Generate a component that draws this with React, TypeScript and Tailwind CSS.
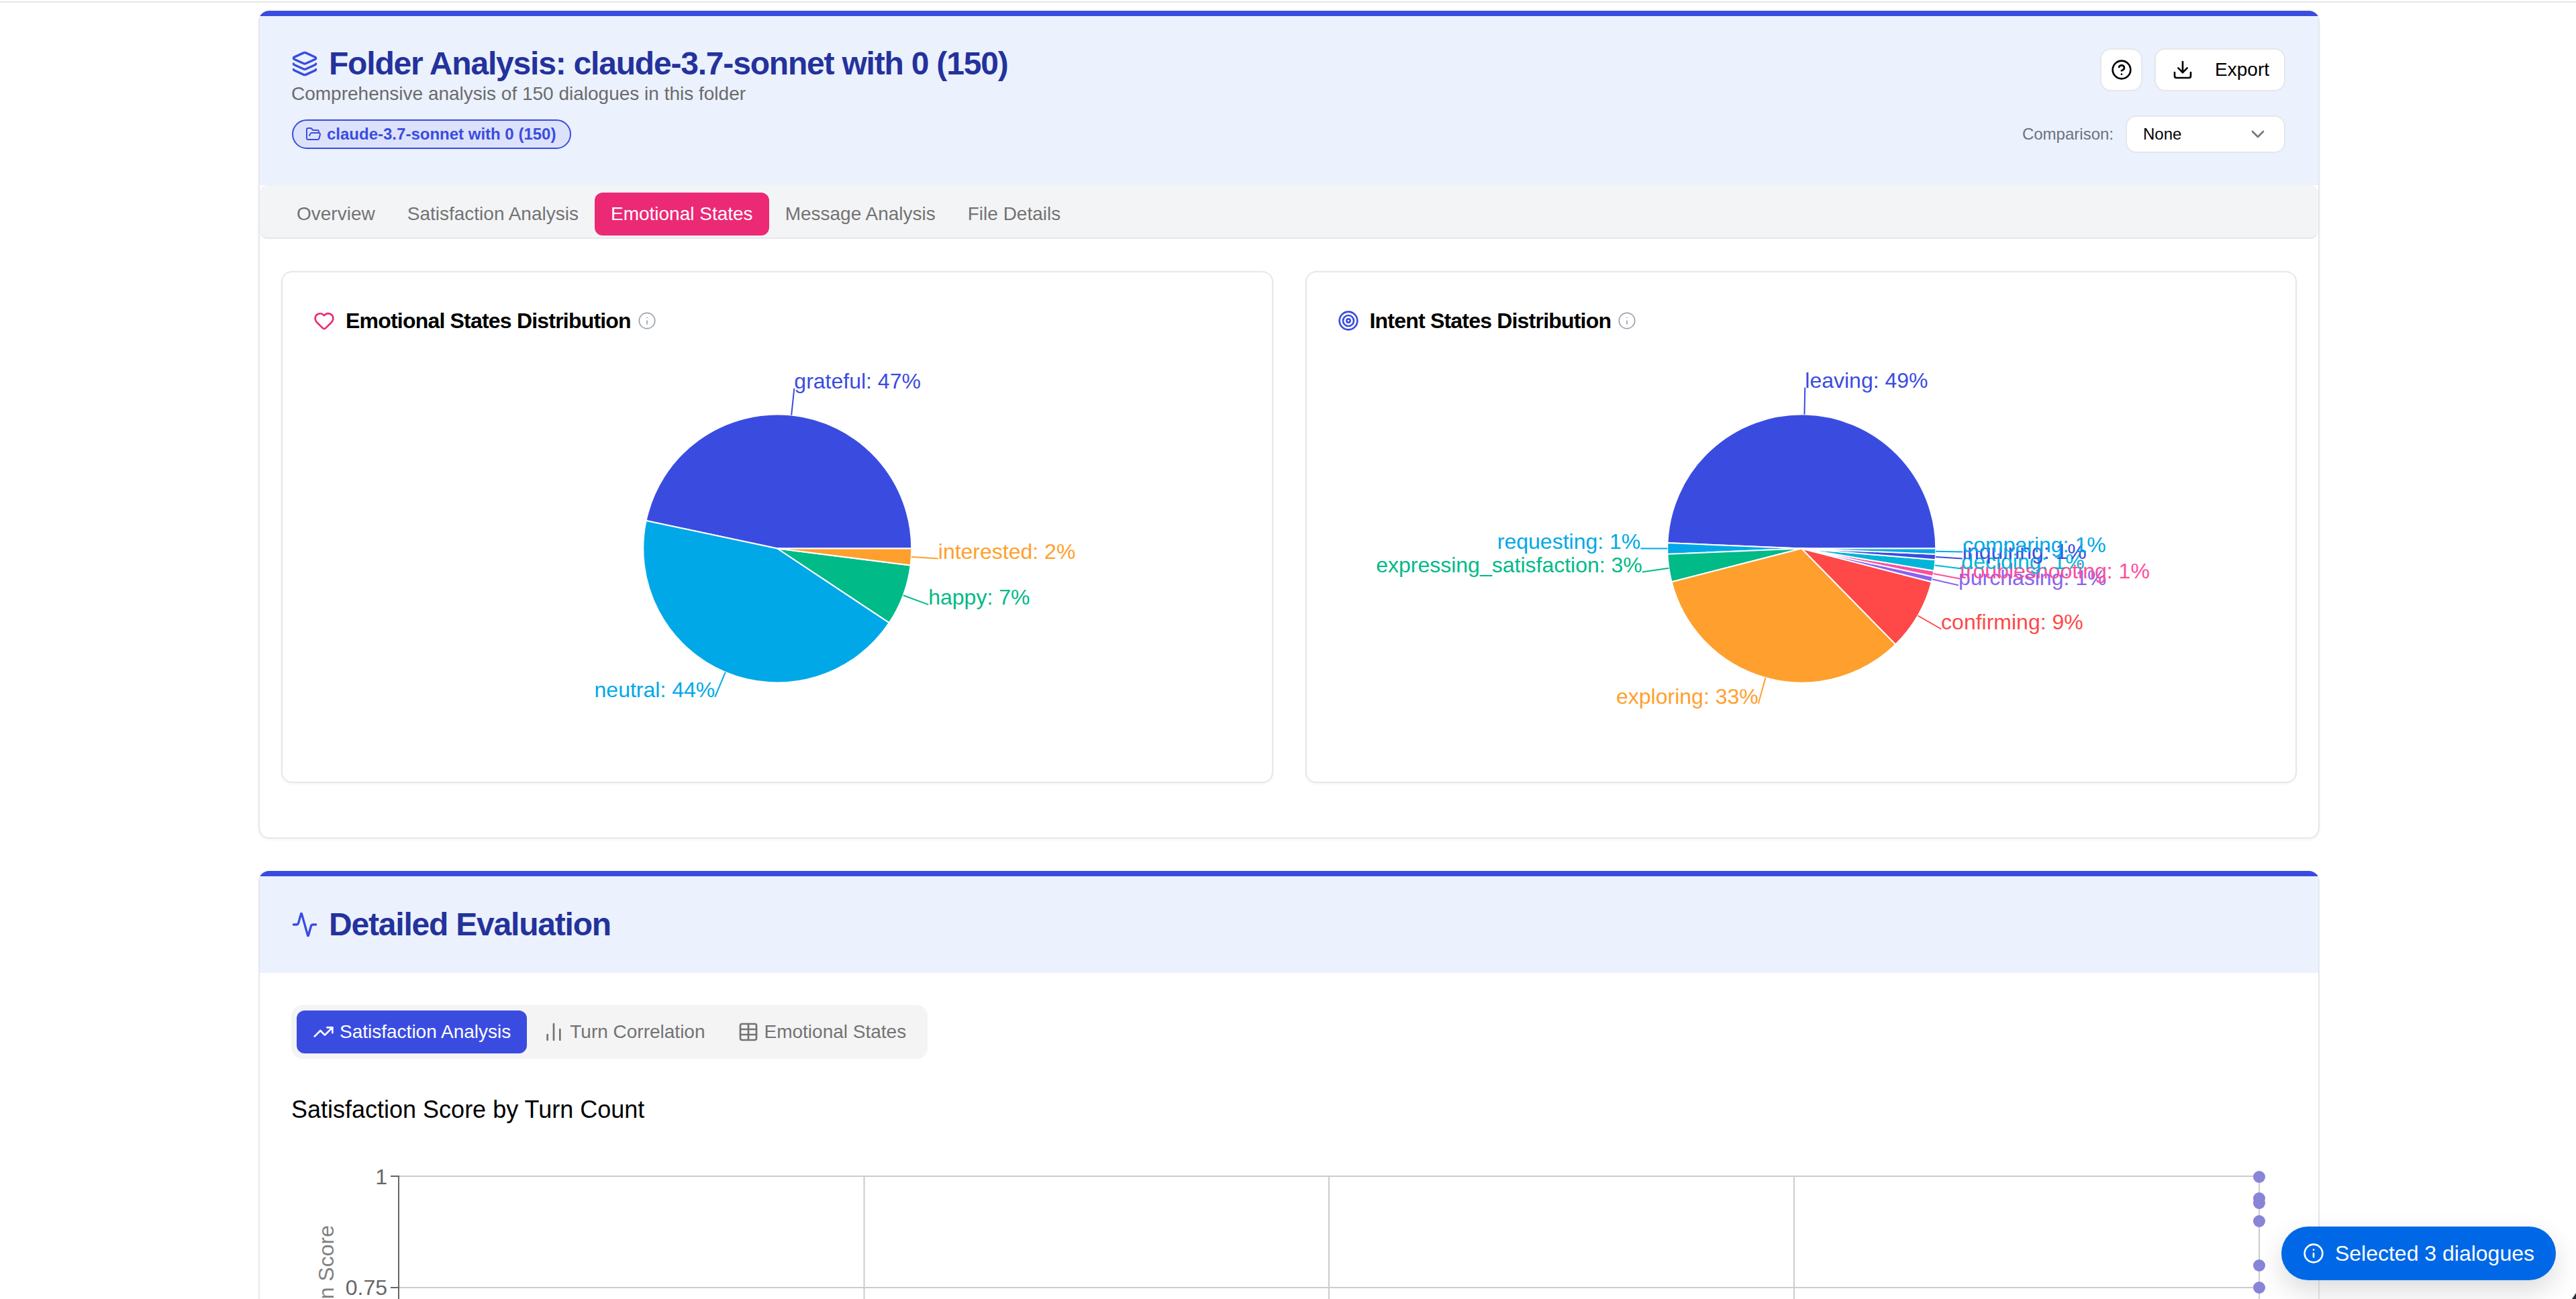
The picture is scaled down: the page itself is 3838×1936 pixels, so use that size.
import {
  Activity,
  ChartNoAxesColumn,
  ChevronDown,
  CircleHelp,
  Download,
  FolderOpen,
  Heart,
  Info,
  Layers,
  Table,
  Target,
  TrendingUp,
} from "lucide-react";

type Slice = { name: string; label: string; value: number; color: string };

const BLUE = "#3a4ce0";
const CYAN = "#00a8e8";

const emotionalStates: Slice[] = [
  { name: "grateful", label: "47%", value: 70, color: BLUE },
  { name: "neutral", label: "44%", value: 66, color: CYAN },
  { name: "happy", label: "7%", value: 11, color: "#00ba88" },
  { name: "interested", label: "2%", value: 3, color: "#ff9f2d" },
];

const intentStates: Slice[] = [
  { name: "leaving", label: "49%", value: 74, color: BLUE },
  { name: "requesting", label: "1%", value: 2, color: CYAN },
  { name: "expressing_satisfaction", label: "3%", value: 5, color: "#00ba88" },
  { name: "exploring", label: "33%", value: 50, color: "#ff9f2d" },
  { name: "confirming", label: "9%", value: 13, color: "#ff4848" },
  { name: "purchasing", label: "1%", value: 1, color: "#8a63f0" },
  { name: "troubleshooting", label: "1%", value: 1, color: "#ff4d9b" },
  { name: "deciding", label: "1%", value: 2, color: "#00b5d8" },
  { name: "inquiring", label: "1%", value: 1, color: BLUE },
  { name: "comparing", label: "1%", value: 1, color: CYAN },
];

const tabs = ["Overview", "Satisfaction Analysis", "Emotional States", "Message Analysis", "File Details"];

// turn-count scatter, all the visible points sit on the last column
const scatterY = [36, 68, 75, 102, 168, 201];

const CX = 737;
const CY = 315.5;
const R = 200;

function polar(radius: number, deg: number) {
  const rad = (deg * Math.PI) / 180;
  return { x: CX + radius * Math.cos(rad), y: CY - radius * Math.sin(rad) };
}

function PieChart({ data }: { data: Slice[] }) {
  const total = data.reduce((sum, d) => sum + d.value, 0);
  let angle = 0;
  const slices = data.map((d) => {
    const start = angle;
    angle += (d.value / total) * 360;
    return { ...d, start, end: angle, mid: (start + angle) / 2 };
  });

  return (
    <svg viewBox="0 0 1473 663" className="block w-full h-[663px]">
      {slices.map((s) => {
        const a = polar(R, s.start);
        const b = polar(R, s.end);
        const large = s.end - s.start > 180 ? 1 : 0;
        return (
          <path
            key={s.name}
            d={`M${CX} ${CY}L${a.x} ${a.y}A${R} ${R} 0 ${large} 0 ${b.x} ${b.y}Z`}
            fill={s.color}
            stroke="#fff"
            strokeWidth={2}
          />
        );
      })}
      {slices.map((s) => {
        const from = polar(R, s.mid);
        const to = polar(R + 40, s.mid);
        return (
          <g key={s.name}>
            <path d={`M${from.x} ${from.y}L${to.x} ${to.y}`} stroke={s.color} strokeWidth={2} fill="none" />
            <text x={to.x} y={to.y} fill={s.color} fontSize={32} textAnchor={to.x > CX ? "start" : "end"}>
              {s.name}: {s.label}
            </text>
          </g>
        );
      })}
    </svg>
  );
}

function ScatterChart() {
  const gridX = [900.5, 1593, 2286, 2979];
  const gridY = [35, 201, 367, 533];
  return (
    <svg viewBox="0 0 3067 600" className="block w-full h-[600px]">
      {gridY.map((y) => (
        <line key={y} x1={207} x2={2979} y1={y} y2={y} stroke="#cccccc" strokeWidth={2} />
      ))}
      {gridX.map((x) => (
        <line key={x} x1={x} x2={x} y1={35} y2={600} stroke="#cccccc" strokeWidth={2} />
      ))}
      <line x1={207} x2={207} y1={34} y2={600} stroke="#666666" strokeWidth={2} />
      <line x1={195} x2={207} y1={35} y2={35} stroke="#666666" strokeWidth={2} />
      <line x1={195} x2={207} y1={201} y2={201} stroke="#666666" strokeWidth={2} />
      <text x={190} y={47} fill="#666666" fontSize={32} textAnchor="end">
        1
      </text>
      <text x={190} y={212} fill="#666666" fontSize={32} textAnchor="end">
        0.75
      </text>
      <text x={110} y={237} transform="rotate(-90 110 237)" fill="#808080" fontSize={32} textAnchor="middle">
        Satisfaction Score
      </text>
      {scatterY.map((y) => (
        <circle key={y} cx={2979} cy={y} r={9} fill="#8884d8" />
      ))}
    </svg>
  );
}

function ChartCard({ title, icon, data }: { title: string; icon: React.ReactNode; data: Slice[] }) {
  return (
    <div className="h-[763px] rounded-[16px] border-2 border-[#e5e7eb] bg-white shadow-[0_2px_4px_rgba(0,0,0,0.04)]">
      <div className="flex h-[48px] items-center pl-[46px] mt-[48px]">
        {icon}
        <span className="ml-[16px] text-[32px] font-bold tracking-[-0.8px] text-black">{title}</span>
        <Info className="ml-[10px] text-[#9ca3af]" size={28} strokeWidth={1.5} />
      </div>
      <PieChart data={data} />
    </div>
  );
}

export default function App() {
  return (
    <div className="relative h-screen overflow-hidden bg-white font-['Liberation_Sans',Arial,sans-serif]">
      <div className="h-[4px] border-b-2 border-[#e5e7eb]" />

      <div className="ml-[385px] mt-[12px] w-[3071px] h-[1234px] rounded-[16px] border-2 border-t-[8px] border-[#e5e7eb] border-t-[#3a4ce0] shadow-[0_2px_4px_rgba(0,0,0,0.04)]">
        <div className="flex h-[252px] justify-between bg-[#ebf1fd] pl-[47px] pr-[49px] pt-[48px]">
          <div>
            <div className="flex h-[46px] items-center">
              <Layers className="text-[#3a4ce0]" size={40} strokeWidth={2} />
              <h1 className="ml-[16px] text-[48px] leading-[46px] font-bold tracking-[-1.2px] text-[#24329c]">
                Folder Analysis: claude-3.7-sonnet with 0 (150)
              </h1>
            </div>
            <p className="text-[28px] leading-[44px] text-[#6b6b6b]">
              Comprehensive analysis of 150 dialogues in this folder
            </p>
            <div className="mt-[16px] ml-[1px] inline-flex h-[44px] items-center gap-[8px] rounded-full border-2 border-[#3a4ce0] bg-[#dce2fb] pl-[18px] pr-[21px] text-[24px] font-bold text-[#3a4ce0]">
              <FolderOpen size={24} strokeWidth={2} />
              claude-3.7-sonnet with 0 (150)
            </div>
          </div>
          <div className="flex flex-col items-end">
            <div className="flex gap-[18px]">
              <button className="flex h-[64px] w-[63px] items-center justify-center rounded-[16px] border-2 border-[#e5e7eb] bg-white text-black">
                <CircleHelp size={32} strokeWidth={2} />
              </button>
              <button className="flex h-[64px] items-center gap-[32px] rounded-[16px] border-2 border-[#e5e7eb] bg-white pl-[24px] pr-[22px] text-[28px] text-black">
                <Download size={32} strokeWidth={2} />
                Export
              </button>
            </div>
            <div className="mt-[36px] flex items-center gap-[18px]">
              <span className="text-[24px] text-[#6b7280]">Comparison:</span>
              <button className="flex h-[56px] w-[238px] items-center justify-between rounded-[16px] border-2 border-[#e5e7eb] bg-white pl-[24px] pr-[23px] text-[24px] text-black">
                None
                <ChevronDown className="text-[#777777]" size={32} strokeWidth={2} />
              </button>
            </div>
          </div>
        </div>

        <div className="flex h-[80px] rounded-[12px] border-b-2 border-[#e5e7eb] bg-[#f3f4f6] pl-[31px] pt-[11px]">
          {tabs.map((tab) =>
            tab === "Emotional States" ? (
              <button key={tab} className="h-[64px] rounded-[12px] bg-[#ec2975] px-[24px] text-[28px] text-white">
                {tab}
              </button>
            ) : (
              <button key={tab} className="h-[64px] px-[24px] text-[28px] text-[#737373]">
                {tab}
              </button>
            )
          )}
        </div>

        <div className="grid grid-cols-2 gap-[48px] px-[32px] pt-[48px]">
          <ChartCard
            title="Emotional States Distribution"
            icon={<Heart className="text-[#ec2975]" size={32} strokeWidth={2} />}
            data={emotionalStates}
          />
          <ChartCard
            title="Intent States Distribution"
            icon={<Target className="text-[#3a4ce0]" size={32} strokeWidth={2} />}
            data={intentStates}
          />
        </div>
      </div>

      <div className="ml-[385px] mt-[48px] w-[3071px] rounded-[16px] border-2 border-t-[8px] border-[#e5e7eb] border-t-[#3a4ce0]">
        <div className="flex h-[144px] items-center gap-[16px] bg-[#ebf1fd] pl-[47px]">
          <Activity className="text-[#3a4ce0]" size={40} strokeWidth={2} />
          <h2 className="text-[48px] font-bold tracking-[-1.2px] text-[#24329c]">Detailed Evaluation</h2>
        </div>
        <div className="px-[47px] pt-[48px]">
          <div className="inline-flex h-[80px] items-center rounded-[16px] bg-[#f4f4f5] p-[8px] text-[28px] text-[#737373]">
            <button className="flex h-[64px] items-center gap-[8px] rounded-[12px] bg-[#3a4ce0] px-[24px] text-white">
              <TrendingUp size={32} strokeWidth={2} />
              Satisfaction Analysis
            </button>
            <button className="flex h-[64px] items-center gap-[8px] px-[24px]">
              <ChartNoAxesColumn size={32} strokeWidth={2} />
              Turn Correlation
            </button>
            <button className="flex h-[64px] items-center gap-[8px] px-[24px]">
              <Table size={32} strokeWidth={2} />
              Emotional States
            </button>
          </div>
          <h3 className="mt-[52px] text-[36px] leading-[48px] text-black">Satisfaction Score by Turn Count</h3>
        </div>
        <div className="mt-[40px]">
          <ScatterChart />
        </div>
      </div>

      <div className="absolute bottom-[28px] right-[30px] flex h-[80px] items-center gap-[16px] rounded-full bg-[#0068e6] px-[32px] text-[32px] text-white shadow-[0_16px_40px_rgba(0,0,0,0.14)]">
        <Info size={32} strokeWidth={2} />
        Selected 3 dialogues
      </div>

      {/* corner of something dark cut off by the window */}
      <svg className="absolute bottom-0 right-0" width={6} height={9} viewBox="0 0 6 9">
        <polygon points="0,9 6,0 6,9" fill="#2a2f38" />
      </svg>
    </div>
  );
}
